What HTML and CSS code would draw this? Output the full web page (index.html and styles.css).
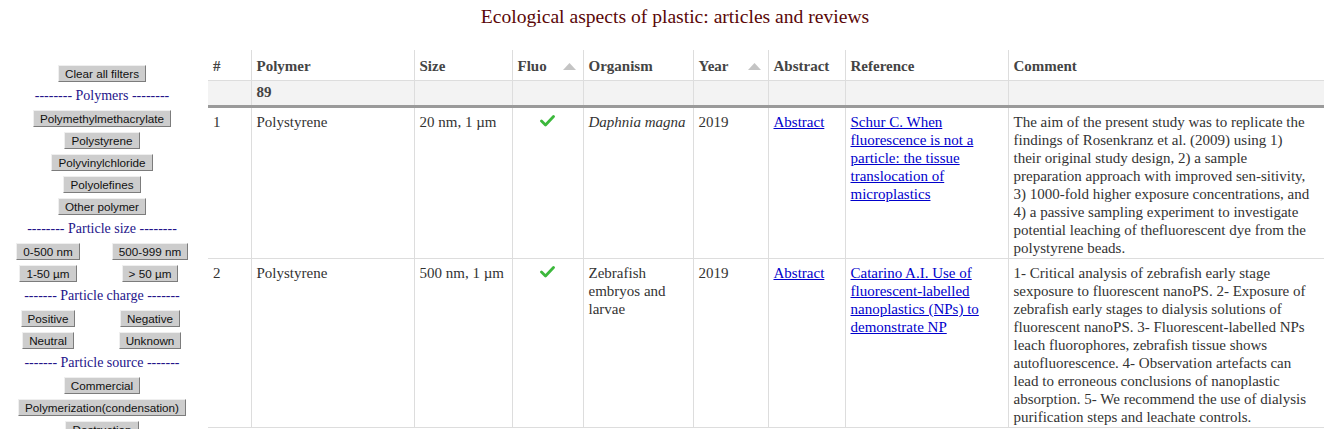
FILE: index.html
```html
<!DOCTYPE html>
<html>
<head>
<meta charset="utf-8">
<title>Ecological aspects of plastic</title>
<link rel="stylesheet" href="styles.css">
</head>
<body>
<div class="page">
  <h1 class="title">Ecological aspects of plastic: articles and reviews</h1>
  <div class="layout">
    <aside class="sidebar">
      <button class="btn">Clear all filters</button>
      <div class="group-title">-------- Polymers --------</div>
      <button class="btn">Polymethylmethacrylate</button>
      <button class="btn">Polystyrene</button>
      <button class="btn">Polyvinylchloride</button>
      <button class="btn">Polyolefines</button>
      <button class="btn">Other polymer</button>
      <div class="group-title">-------- Particle size --------</div>
      <div class="pair">
        <button class="btn">0-500 nm</button>
        <button class="btn">500-999 nm</button>
        <button class="btn">1-50 µm</button>
        <button class="btn">&gt; 50 µm</button>
      </div>
      <div class="group-title">------- Particle charge -------</div>
      <div class="pair">
        <button class="btn">Positive</button>
        <button class="btn">Negative</button>
        <button class="btn">Neutral</button>
        <button class="btn">Unknown</button>
      </div>
      <div class="group-title">------- Particle source -------</div>
      <button class="btn">Commercial</button>
      <button class="btn">Polymerization(condensation)</button>
      <button class="btn">Destruction</button>
    </aside>
    <main class="content">
      <table class="data">
        <colgroup>
          <col class="c-num"><col class="c-poly"><col class="c-size"><col class="c-fluo"><col class="c-org"><col class="c-year"><col class="c-abs"><col class="c-ref"><col class="c-com">
        </colgroup>
        <thead>
          <tr class="head">
            <th>#</th>
            <th>Polymer</th>
            <th>Size</th>
            <th><div class="sortable">Fluo <svg class="arrow" width="13" height="7" viewBox="0 0 13 7"><polygon points="0,7 6.5,0 13,7" fill="#c4c4c4"/></svg></div></th>
            <th>Organism</th>
            <th><div class="sortable">Year <svg class="arrow" width="13" height="7" viewBox="0 0 13 7"><polygon points="0,7 6.5,0 13,7" fill="#c4c4c4"/></svg></div></th>
            <th>Abstract</th>
            <th>Reference</th>
            <th>Comment</th>
          </tr>
          <tr class="filter">
            <th></th><th>89</th><th></th><th></th><th></th><th></th><th></th><th></th><th></th>
          </tr>
        </thead>
        <tbody>
          <tr>
            <td>1</td>
            <td>Polystyrene</td>
            <td>20 nm, 1 µm</td>
            <td class="center"><svg class="check" width="15" height="12" viewBox="0 0 15 12"><polyline points="1.5,6 5.5,10 13.5,1.5" fill="none" stroke="#3cb83c" stroke-width="2.8" stroke-linecap="round" stroke-linejoin="round"/></svg></td>
            <td><i>Daphnia magna</i></td>
            <td>2019</td>
            <td><a href="#">Abstract</a></td>
            <td><a href="#">Schur C. When fluorescence is not a particle: the tissue translocation of microplastics</a></td>
            <td class="comment">The aim of the present study was to replicate the findings of Rosenkranz et al. (2009) using 1) their original study design, 2) a sample preparation approach with improved sen-sitivity, 3) 1000-fold higher exposure concentrations, and 4) a passive sampling experiment to investigate potential leaching of thefluorescent dye from the polystyrene beads.</td>
          </tr>
          <tr>
            <td>2</td>
            <td>Polystyrene</td>
            <td>500 nm, 1 µm</td>
            <td class="center"><svg class="check" width="15" height="12" viewBox="0 0 15 12"><polyline points="1.5,6 5.5,10 13.5,1.5" fill="none" stroke="#3cb83c" stroke-width="2.8" stroke-linecap="round" stroke-linejoin="round"/></svg></td>
            <td>Zebrafish embryos and larvae</td>
            <td>2019</td>
            <td><a href="#">Abstract</a></td>
            <td><a href="#">Catarino A.I. Use of fluorescent-labelled nanoplastics (NPs) to demonstrate NP</a></td>
            <td class="comment">1- Critical analysis of zebrafish early stage sexposure to fluorescent nanoPS. 2- Exposure of zebrafish early stages to dialysis solutions of fluorescent nanoPS. 3- Fluorescent-labelled NPs leach fluorophores, zebrafish tissue shows autofluorescence. 4- Observation artefacts can lead to erroneous conclusions of nanoplastic absorption. 5- We recommend the use of dialysis purification steps and leachate controls.</td>
          </tr>
        </tbody>
      </table>
    </main>
  </div>
</div>
</body>
</html>
```

FILE: styles.css
```css
html, body {
  margin: 0;
  padding: 0;
  background: #ffffff;
  overflow: hidden;
}

.page {
  width: 1324px;
  font-family: "Liberation Serif", "Times New Roman", serif;
  color: #333333;
}

.title {
  margin: 0;
  height: 50px;
  padding: 5px 0 0 26px;
  box-sizing: border-box;
  text-align: center;
  font-size: 19.6px;
  line-height: 24px;
  font-weight: normal;
  color: #5a0808;
}

.layout {
  display: flex;
  align-items: flex-start;
}

.sidebar {
  width: 188px;
  padding: 15px 12px 0 8px;
  display: flex;
  flex-direction: column;
  align-items: center;
  gap: 5px;
  flex: none;
}

.group-title {
  font-size: 14px;
  line-height: 18px;
  color: #24148a;
  white-space: nowrap;
}

.btn {
  height: 17px;
  margin: 0;
  padding: 0 6px;
  font-family: "Liberation Sans", Arial, sans-serif;
  font-size: 11.7px;
  line-height: 15px;
  color: #111111;
  background: #cdcdcd;
  border: 1px solid;
  border-color: #efefef #7c7c7c #7c7c7c #efefef;
  border-radius: 0;
  white-space: nowrap;
}

.pair {
  align-self: flex-start;
  width: 204px;
  display: grid;
  grid-template-columns: 80px 124px;
  row-gap: 5px;
  justify-items: center;
}

.content {
  flex: none;
}

.data {
  width: 1116px;
  table-layout: fixed;
  border-collapse: collapse;
  font-size: 15px;
  line-height: 18px;
}

.c-num { width: 43px; }
.c-poly { width: 163px; }
.c-size { width: 98px; }
.c-fluo { width: 71px; }
.c-org { width: 110px; }
.c-year { width: 75px; }
.c-abs { width: 77px; }
.c-ref { width: 163px; }
.c-com { width: 316px; }

.data th, .data td {
  text-align: left;
  vertical-align: top;
  border-left: 1px solid #dddddd;
}

.data th:first-child, .data td:first-child {
  border-left: none;
}

.head th {
  padding: 7px 5px 5px 5px;
  font-weight: bold;
  color: #444444;
  border-bottom: 1px solid #dddddd;
}

.sortable {
  display: flex;
  justify-content: space-between;
  align-items: center;
}

.arrow {
  margin-right: 2px;
}

.filter th {
  padding: 2px 5px 4px 5px;
  height: 18px;
  background: #f3f3f3;
  font-weight: bold;
  color: #444444;
  border-bottom: 3px solid #9a9a9a;
}

.data td {
  padding: 5px 5px 1px 5px;
  border-bottom: 1px solid #dddddd;
}

.data td.comment {
  padding-right: 14px;
}

.data td.center {
  text-align: center;
}

.check {
  display: inline-block;
  margin-top: 2px;
}

.data a {
  color: #0000cc;
  text-decoration: underline;
}
```
